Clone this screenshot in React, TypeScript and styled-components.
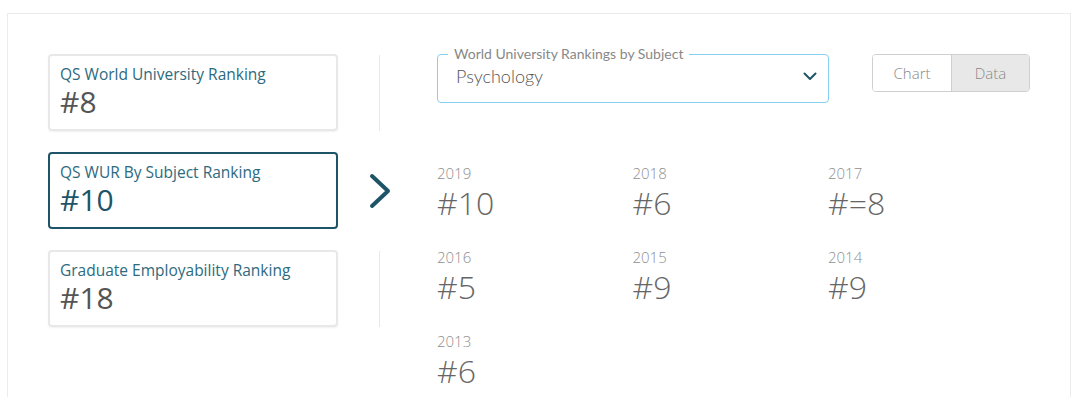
import React from "react";
import styled, { createGlobalStyle } from "styled-components";

const Global = createGlobalStyle`
  html, body { margin: 0; padding: 0; background: #fff; }
  body { font-family: "Open Sans", "Liberation Sans", sans-serif; overflow: hidden; }
`;

const Panel = styled.div`
  margin: 13px 9px 0 7px;
  border: 1px solid #ececec;
  border-bottom: none;
  height: 384px;
  overflow: hidden;
  box-sizing: border-box;
  padding: 40px 40px 0 40px;
  display: flex;
`;

const LeftCol = styled.div`
  width: 290px;
  display: flex;
  flex-direction: column;
  gap: 21px;
`;

const Card = styled.div<{ $active?: boolean }>`
  height: 77px;
  box-sizing: border-box;
  border: 2px solid ${(p) => (p.$active ? "#1e5468" : "#e8e8e8")};
  border-radius: 4px;
  box-shadow: ${(p) => (p.$active ? "none" : "0 1px 2px rgba(0,0,0,0.06)")};
  padding: 8px 0 0 10px;
  display: flex;
  flex-direction: column;
`;

const CardLabel = styled.div`
  font-size: 15.5px;
  line-height: 20px;
  color: #2d6a7e;
`;

const CardValue = styled.div<{ $active?: boolean }>`
  font-size: 30px;
  line-height: 36px;
  color: ${(p) => (p.$active ? "#1e5468" : "#555")};
`;

const MidCol = styled.div`
  width: 99px;
  display: flex;
  flex-direction: column;
  gap: 21px;
`;

const MidCell = styled.div`
  height: 77px;
  padding-right: 16px;
  display: flex;
  justify-content: center;
  align-items: center;
`;

const VLine = styled.div`
  width: 1px;
  height: 76px;
  background: #e8e8e8;
`;

const RightCol = styled.div`
  flex: 1;
  display: flex;
  flex-direction: column;
`;

const TopRow = styled.div`
  display: flex;
  justify-content: space-between;
  align-items: flex-start;
`;

const Select = styled.fieldset`
  margin: -8px 0 0 0;
  width: 392px;
  height: 57px;
  box-sizing: border-box;
  border: 1px solid #86d0ef;
  border-radius: 4px;
  padding: 0 11px 0 10px;
  display: flex;
  align-items: center;
  justify-content: space-between;
  font-family: Lato, "Liberation Sans", sans-serif;
`;

const Legend = styled.legend`
  padding: 0 6px;
  font-size: 14px;
  line-height: 16px;
  color: #888;
`;

const SelectValue = styled.span`
  font-size: 18px;
  font-weight: 300;
  color: #555;
  padding-left: 8px;
  margin-top: -13px;
`;

const SelectArrow = styled.svg`
  margin-top: -11px;
`;

const Toggle = styled.div`
  display: flex;
  border: 1px solid #cfcfcf;
  border-radius: 4px;
  overflow: hidden;
  height: 38px;
  box-sizing: border-box;
`;

const ToggleBtn = styled.div<{ $on?: boolean; $w: number }>`
  width: ${(p) => p.$w}px;
  display: flex;
  align-items: center;
  justify-content: center;
  font-size: 15px;
  font-weight: 300;
  color: #888;
  background: ${(p) => (p.$on ? "#e8e8e8" : "#fff")};
  & + & {
    border-left: 1px solid #cfcfcf;
  }
`;

const DataGrid = styled.div`
  margin-top: 58px;
  display: grid;
  grid-template-columns: repeat(3, 195.5px);
  row-gap: 24px;
`;

const Item = styled.div`
  display: flex;
  flex-direction: column;
`;

const Year = styled.div`
  font-size: 15px;
  line-height: 24px;
  font-weight: 300;
  color: #8f8f8f;
`;

const Rank = styled.div`
  font-size: 32px;
  line-height: 36px;
  font-weight: 300;
  color: #666;
`;

const data = [
  ["2019", "#10"],
  ["2018", "#6"],
  ["2017", "#=8"],
  ["2016", "#5"],
  ["2015", "#9"],
  ["2014", "#9"],
  ["2013", "#6"],
];

export default function App() {
  return (
    <>
      <Global />
      <Panel>
        <LeftCol>
          <Card>
            <CardLabel>QS World University Ranking</CardLabel>
            <CardValue>#8</CardValue>
          </Card>
          <Card $active>
            <CardLabel>QS WUR By Subject Ranking</CardLabel>
            <CardValue $active>#10</CardValue>
          </Card>
          <Card>
            <CardLabel>Graduate Employability Ranking</CardLabel>
            <CardValue>#18</CardValue>
          </Card>
        </LeftCol>
        <MidCol>
          <MidCell>
            <VLine />
          </MidCell>
          <MidCell>
            <svg width="24" height="38" viewBox="0 0 24 38">
              <polyline
                points="4,4 20,19 4,34"
                fill="none"
                stroke="#1e5468"
                strokeWidth="4"
                strokeLinecap="round"
                strokeLinejoin="round"
              />
            </svg>
          </MidCell>
          <MidCell>
            <VLine />
          </MidCell>
        </MidCol>
        <RightCol>
          <TopRow>
            <Select>
              <Legend>World University Rankings by Subject</Legend>
              <SelectValue>Psychology</SelectValue>
              <SelectArrow width="14" height="9" viewBox="0 0 14 9">
                <polyline
                  points="1.5,1.5 7,7 12.5,1.5"
                  fill="none"
                  stroke="#1e5468"
                  strokeWidth="2"
                  strokeLinecap="round"
                  strokeLinejoin="round"
                />
              </SelectArrow>
            </Select>
            <Toggle>
              <ToggleBtn $w={78}>Chart</ToggleBtn>
              <ToggleBtn $w={77} $on>
                Data
              </ToggleBtn>
            </Toggle>
          </TopRow>
          <DataGrid>
            {data.map(([y, r]) => (
              <Item key={y}>
                <Year>{y}</Year>
                <Rank>{r}</Rank>
              </Item>
            ))}
          </DataGrid>
        </RightCol>
      </Panel>
    </>
  );
}
